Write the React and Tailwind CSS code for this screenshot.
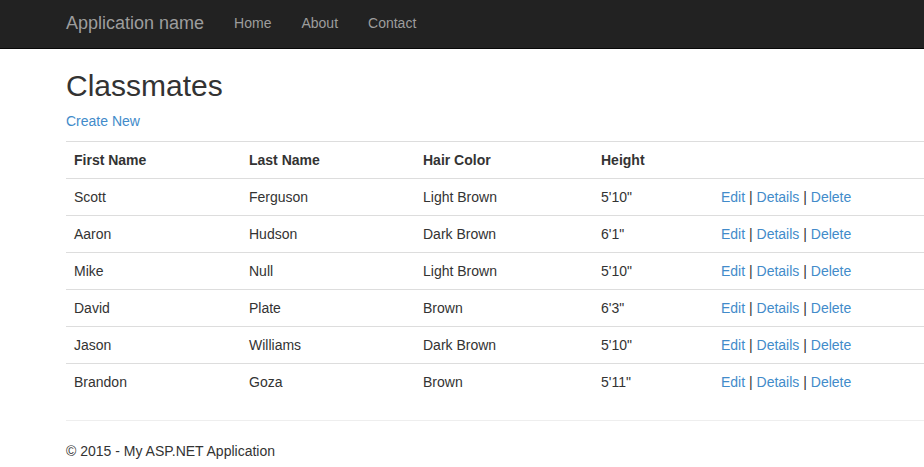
const classmates = [
    { first: 'Scott', last: 'Ferguson', hair: 'Light Brown', height: '5\'10"' },
    { first: 'Aaron', last: 'Hudson', hair: 'Dark Brown', height: '6\'1"' },
    { first: 'Mike', last: 'Null', hair: 'Light Brown', height: '5\'10"' },
    { first: 'David', last: 'Plate', hair: 'Brown', height: '6\'3"' },
    { first: 'Jason', last: 'Williams', hair: 'Dark Brown', height: '5\'10"' },
    { first: 'Brandon', last: 'Goza', hair: 'Brown', height: '5\'11"' },
]

const navLinks = ['Home', 'About', 'Contact']

const App = () => {
    return (
        <div
            className="min-h-[467px] w-[924px] overflow-hidden bg-white text-[14px] leading-[20px] text-[#333]"
            style={{ fontFamily: '"Liberation Sans", Arial, Helvetica, sans-serif' }}
        >
            {/* Navbar */}
            <nav className="h-[49px] bg-[#222] border-b border-[#080808] flex items-center pl-[66px] pb-[2px]">
                <a href="#" className="text-[18px] leading-[20px] text-[#9d9d9d] pr-[15px]">
                    Application name
                </a>
                {navLinks.map(link => (
                    <a key={link} href="#" className="px-[15px] text-[#9d9d9d]">
                        {link}
                    </a>
                ))}
            </nav>

            {/* Body */}
            <div className="pl-[66px]">
                <h2 className="mt-[20px] text-[30px] leading-[33px] font-normal text-[#333]">Classmates</h2>
                <p className="mt-[9px]">
                    <a href="#" className="text-[#428bca]">Create New</a>
                </p>

                <table className="mt-[10px] w-[858px] border-collapse table-fixed">
                    <colgroup>
                        <col className="w-[175px]" />
                        <col className="w-[174px]" />
                        <col className="w-[178px]" />
                        <col className="w-[120px]" />
                        <col />
                    </colgroup>
                    <tbody>
                        <tr>
                            <th className="border-t border-[#ddd] p-[8px] text-left font-bold">First Name</th>
                            <th className="border-t border-[#ddd] p-[8px] text-left font-bold">Last Name</th>
                            <th className="border-t border-[#ddd] p-[8px] text-left font-bold">Hair Color</th>
                            <th className="border-t border-[#ddd] p-[8px] text-left font-bold">Height</th>
                            <th className="border-t border-[#ddd] p-[8px]"></th>
                        </tr>
                        {classmates.map(c => (
                            <tr key={c.first}>
                                <td className="border-t border-[#ddd] p-[8px]">{c.first}</td>
                                <td className="border-t border-[#ddd] p-[8px]">{c.last}</td>
                                <td className="border-t border-[#ddd] p-[8px]">{c.hair}</td>
                                <td className="border-t border-[#ddd] p-[8px]">{c.height}</td>
                                <td className="border-t border-[#ddd] p-[8px] whitespace-nowrap">
                                    <a href="#" className="text-[#428bca]">Edit</a> |{' '}
                                    <a href="#" className="text-[#428bca]">Details</a> |{' '}
                                    <a href="#" className="text-[#428bca]">Delete</a>
                                </td>
                            </tr>
                        ))}
                    </tbody>
                </table>

                {/* Footer */}
                <hr className="mt-[20px] border-0 border-t border-[#eee]" />
                <footer>
                    <p className="mt-[20px]">&copy; 2015 - My ASP.NET Application</p>
                </footer>
            </div>
        </div>
    )
}

export default App
